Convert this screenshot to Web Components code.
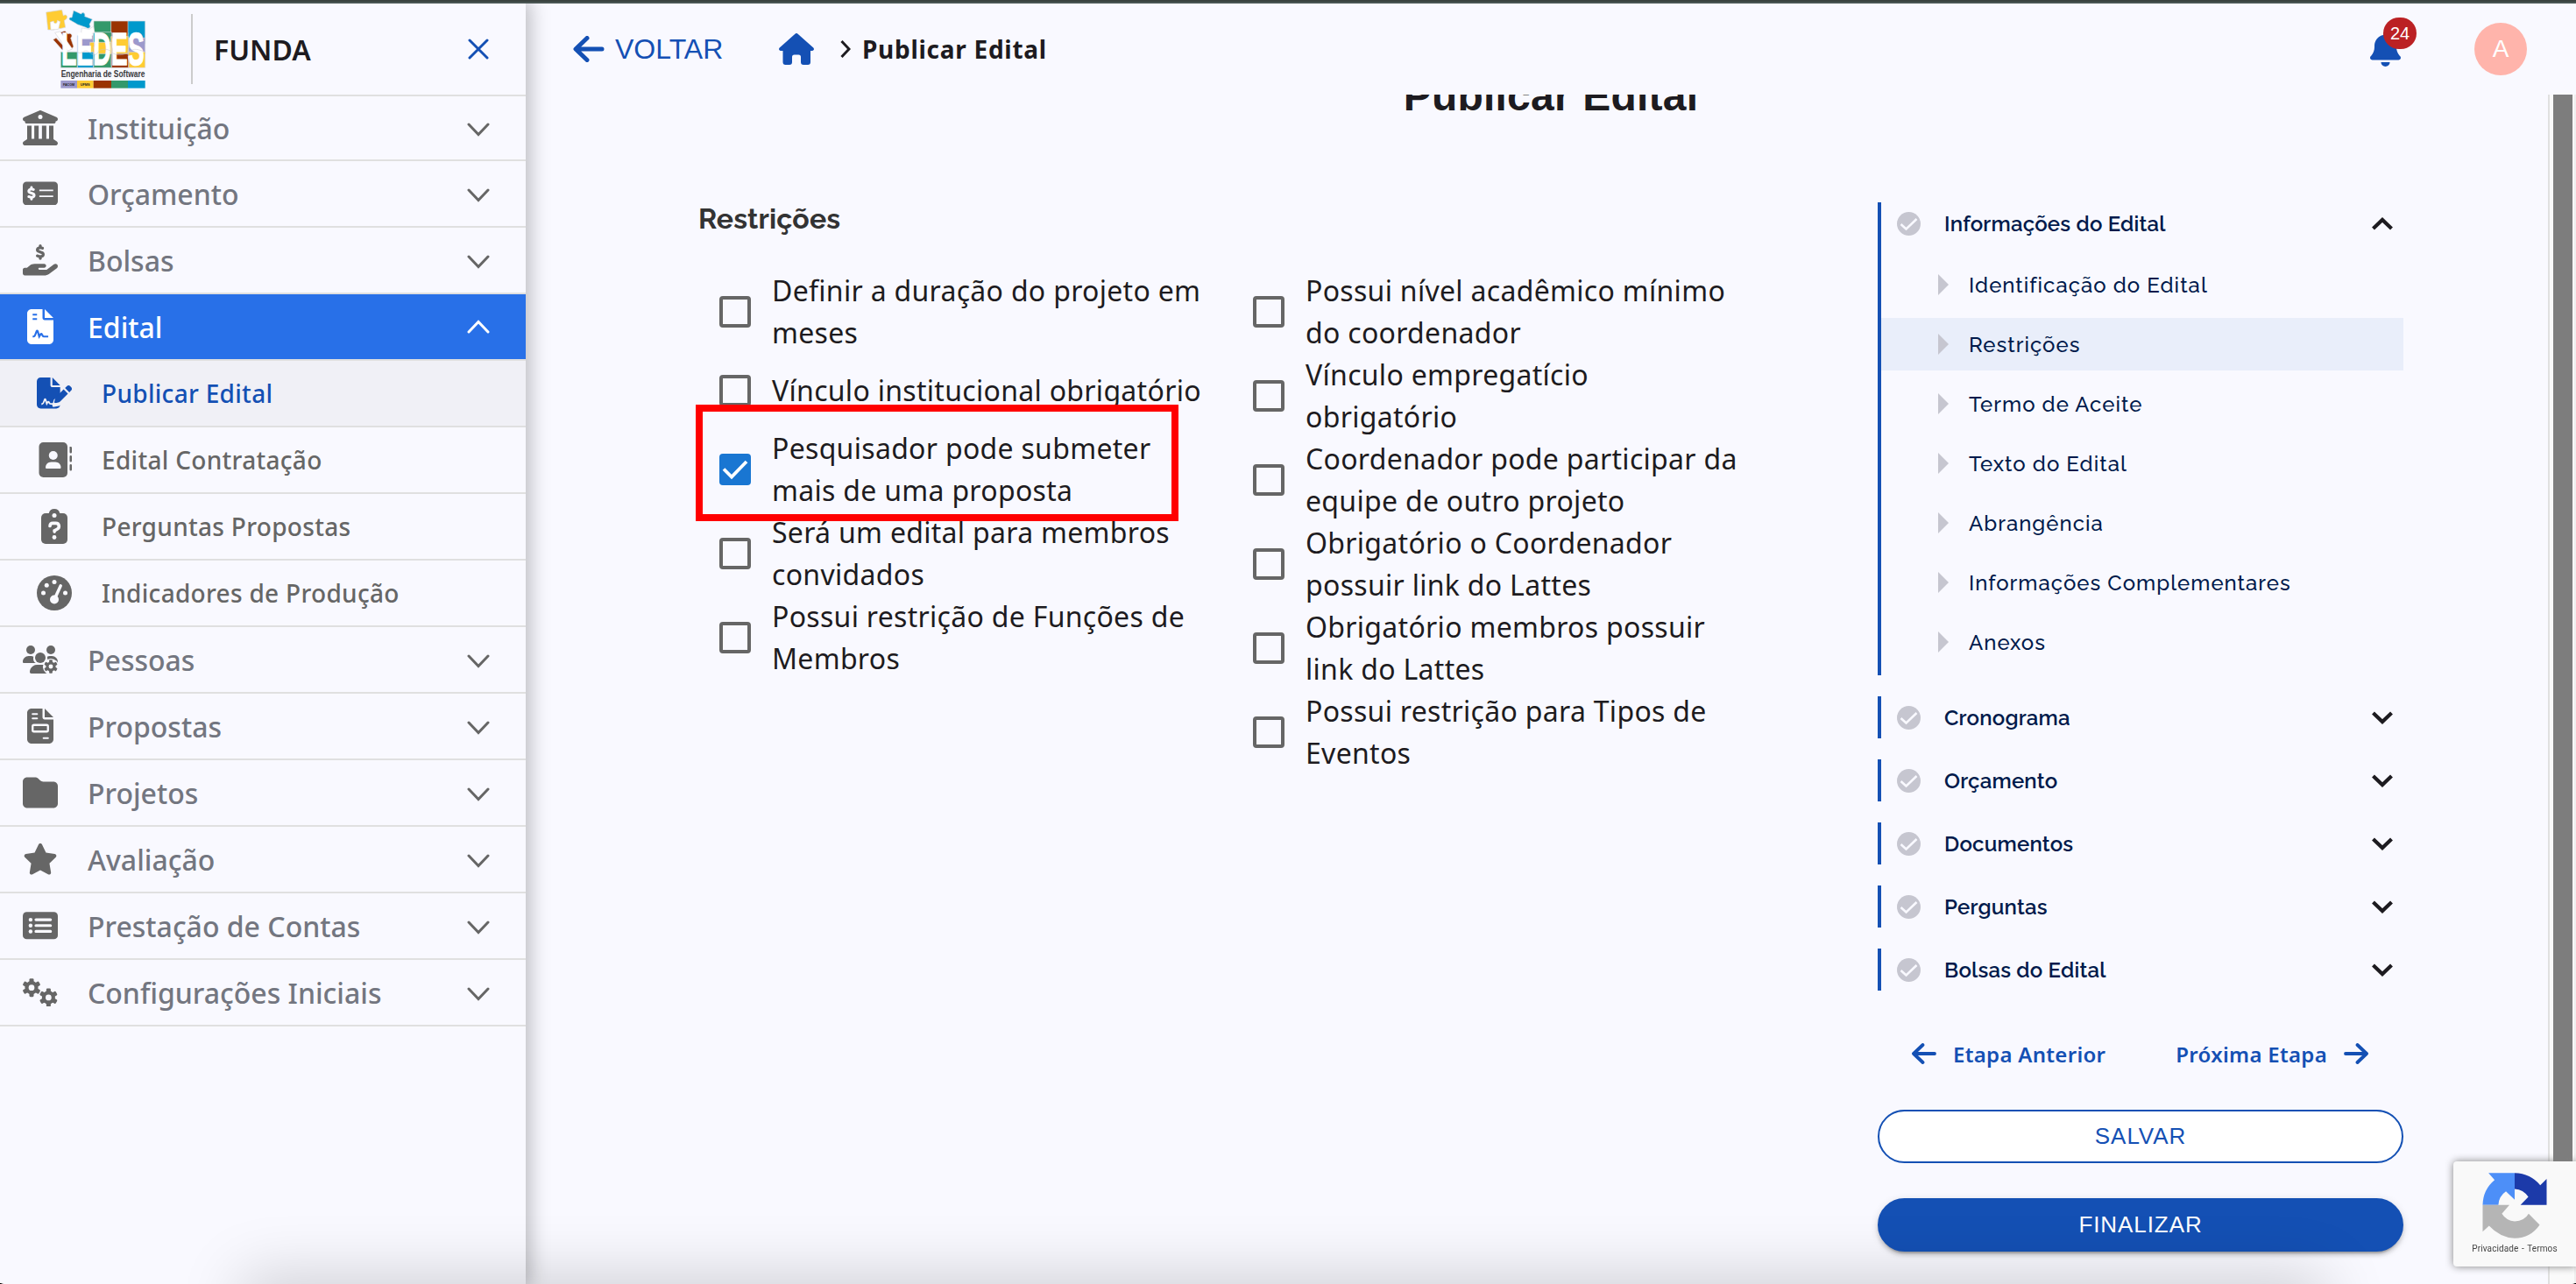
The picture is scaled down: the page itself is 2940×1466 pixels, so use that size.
<!DOCTYPE html>
<html lang="pt-BR">
<head>
<meta charset="utf-8">
<title>Publicar Edital</title>
<style>
	body{
		margin: 0;
		background: #f9f9ff;
		color: #1d1b20;
		font-family: "Noto Sans", sans-serif;
		overflow: hidden;
	}
</style>
</head>
<body>
<edital-page></edital-page>

<script>
const DOLAR = "M312 24V34.5c6.4 1.2 12.6 2.7 18.2 4.2c12.8 3.4 20.4 16.6 17 29.4s-16.6 20.4-29.4 17c-10.9-2.9-21.1-4.9-30.2-5c-7.3-.1-14.7 1.7-19.4 4.4c-2.1 1.3-3.1 2.4-3.5 3c-.3 .5-.7 1.2-.7 2.8c0 .3 0 .5 0 .6c.2 .2 .9 1.2 3.3 2.6c5.8 3.5 14.4 6.2 27.4 10.1l.9 .3c11.1 3.3 25.9 7.8 37.9 15.3c13.7 8.6 26.1 22.9 26.4 44.9c.3 22.5-11.4 38.9-26.7 48.5c-6.7 4.1-13.9 7-21.3 8.8V232c0 13.3-10.7 24-24 24s-24-10.7-24-24V220.6c-9.5-2.3-18.2-5.3-25.6-7.8c-2.1-.7-4.1-1.4-6-2c-12.6-4.2-19.4-17.8-15.2-30.4s17.8-19.4 30.4-15.2c2.6 .9 5 1.7 7.3 2.5c13.6 4.6 23.4 7.9 33.9 8.3c8 .3 15.1-1.6 19.2-4.1c1.9-1.2 2.8-2.2 3.2-2.9c.4-.6 .9-1.8 .8-4.1l0-.2c0-1 0-2.1-4-4.6c-5.7-3.6-14.3-6.4-27.1-10.3l-1.9-.6c-10.8-3.2-25-7.5-36.4-14.4c-13.5-8.1-26.5-22-26.6-44.1c-.1-22.9 12.9-38.6 27.7-47.4c6.4-3.8 13.3-6.4 20.2-8.2V24c0-13.3 10.7-24 24-24s24 10.7 24 24z";
const FOLHA = "M64 0C28.7 0 0 28.7 0 64V448c0 35.3 28.7 64 64 64H320c35.3 0 64-28.7 64-64V160H256c-17.7 0-32-14.3-32-32V0H64zM256 0V128H384L256 0z";

// engrenagem de seis dentes
function gear(cx, cy, r){
	let dentes = "";
	for(let i = 0; i < 6; i++){
		dentes += `<rect x="${cx - r * .24}" y="${cy - r}" width="${r * .48}" height="${r}" rx="${r * .12}" transform="rotate(${i * 60} ${cx} ${cy})"/>`;
	}
	return `${dentes}<circle cx="${cx}" cy="${cy}" r="${r * .72}"/><circle class="cut" cx="${cx}" cy="${cy}" r="${r * .32}"/>`;
}

// [viewBox, largura, conteúdo]
const ICONS = {
	instituicao: ["0 0 512 512", 40, `<path d="M243.4 2.6l-224 96c-14 6-21.8 21-18.7 35.8S16.8 160 32 160v8c0 13.3 10.7 24 24 24H456c13.3 0 24-10.7 24-24v-8c15.2 0 28.3-10.7 31.3-25.6s-4.8-29.9-18.7-35.8l-224-96c-8-3.4-17.2-3.4-25.2 0zM128 224H64V420.3c-.6 .3-1.2 .7-1.8 1.1l-48 32c-11.7 7.8-17 22.4-12.9 35.9S17.9 512 32 512H480c14.1 0 26.5-9.2 30.6-22.7s-1.1-28.1-12.9-35.9l-48-32c-.6-.4-1.2-.7-1.8-1.1V224H384V416H344V224H280V416H232V224H168V416H128V224zM256 64a32 32 0 1 1 0 64 32 32 0 1 1 0-64z"/>`],
	orcamento: ["0 0 576 512", 40, `<rect y="64" width="576" height="384" rx="60"/><path class="cut" transform="translate(-122 136) scale(.92)" d="${DOLAR}"/><path class="ln" stroke-width="26" d="M272 208H500M272 304H500"/>`],
	bolsas: ["0 0 576 512", 40, `<path d="${DOLAR}"/><path d="M568.2 336.3c13.1 17.8 9.3 42.8-8.5 55.9L433.1 485.5c-23.4 17.2-51.6 26.5-80.7 26.5H192 32c-17.7 0-32-14.3-32-32V416c0-17.7 14.3-32 32-32H68.8l44.9-36c22.7-18.2 50.9-28 80-28H272h16 64c17.7 0 32 14.3 32 32s-14.3 32-32 32H288 272c-8.8 0-16 7.2-16 16s7.2 16 16 16H392.6l119.7-88.2c17.8-13.1 42.8-9.3 55.9 8.5z"/>`],
	edital: ["0 0 384 512", 30, `<path d="${FOLHA}"/><path class="ln" stroke-width="28" d="M80 80H144M80 144H144"/><path class="ln" stroke-width="28" d="M80 400h12c16 0 22-14 28-32l18-46c4-10 12-10 16 0l22 78 20-34c6-8 14-8 18 0l14 24c4 8 8 10 16 10h64"/>`],
	publicar: ["0 0 576 512", 40, `<path d="${FOLHA}"/><path class="cut" d="M548 118L280 368l-28 92 16 26 110-20 220-238z"/><path d="M550 143c-15.600-15.600-40.900-15.600-56.600 0L464 172.500l71 71 29.500-29.400c15.600-15.600 15.600-40.900 0-56.600zM441 195L312 325c-4 4-7 9-8.400 15L288 401c-1.400 5.400 .2 11 4.200 15s9.700 5.600 15.200 4.200l60-15c5.600-1.400 10.800-4.300 14.900-8.400L512 267z"/><path class="ln" stroke-width="26" d="M76 436h10c16 0 22-14 28-32l14-40c4-10 12-10 16 0l20 68 16-28c6-8 14-8 18 0l10 16c6 10 12 14 24 14h84"/>`],
	contratacao: ["0 0 512 512", 40, `<rect x="32" width="416" height="512" rx="64"/><circle class="cut" cx="240" cy="192" r="64"/><path class="cut" d="M128 368c0-44 36-80 80-80h64c44 0 80 36 80 80 0 10-7 16-16 16H144c-9 0-16-7-16-16z"/><path d="M480 64h16a16 16 0 0 1 16 16v64a16 16 0 0 1-32 0zM480 208a16 16 0 0 1 32 0v64a16 16 0 0 1-32 0zM480 336a16 16 0 0 1 32 0v64a16 16 0 0 1-32 0z"/>`],
	perguntas: ["0 0 384 512", 30, `<rect y="64" width="384" height="448" rx="64"/><path d="M80 96c20 0 26-6 32-32a82 82 0 0 1 160 0c6 26 12 32 32 32z"/><circle class="cut" cx="192" cy="96" r="32"/><path class="ln" stroke-width="46" stroke-linecap="round" d="M128 250c2-26 16-40 42-40h42c58 0 62 66 20 88l-38 20v16"/><circle class="cut" cx="192" cy="416" r="31"/>`],
	indicadores: ["0 0 512 512", 40, `<circle cx="256" cy="256" r="256"/><g class="cut"><circle cx="256" cy="96" r="32"/><circle cx="144" cy="144" r="32"/><circle cx="96" cy="256" r="32"/><circle cx="416" cy="256" r="32"/><circle cx="256" cy="352" r="64"/></g><path class="ln" stroke-width="46" stroke-linecap="round" d="M262 340L348 152"/>`],
	pessoas: ["0 0 640 512", 40, `<circle cx="144" cy="80" r="80"/><circle cx="512" cy="80" r="80"/><path d="M0 299c0-59 48-107 107-107h43c16 0 31 4 45 10-12 60 8 100 42 118H21c-12 0-21-9-21-21zM405 320c40-26 52-60 42-118 14-6 29-10 45-10h41c59 0 107 48 107 107 0 12-9 21-21 21z"/><circle cx="320" cy="224" r="96"/><path d="M128 485c0-74 60-133 133-133h116c30 0 58 10 80 27v133H155c-15 0-27-12-27-27z"/><circle class="cut" cx="512" cy="384" r="145"/>${gear(512, 384, 124)}`],
	propostas: ["0 0 384 512", 30, `<path d="${FOLHA}"/><path class="ln" stroke-width="28" stroke-linecap="round" d="M80 80H144M80 144H144M240 432H304"/><rect class="ln" stroke-width="30" x="80" y="240" width="224" height="96" rx="18"/>`],
	projetos: ["0 0 512 512", 40, `<path d="M64 480H448c35.3 0 64-28.7 64-64V160c0-35.3-28.7-64-64-64H298.5c-17 0-33.3-6.7-45.3-18.7L226.7 50.7c-12-12-28.3-18.7-45.3-18.7H64C28.7 32 0 60.7 0 96V416c0 35.3 28.7 64 64 64z"/>`],
	avaliacao: ["0 0 576 512", 40, `<path d="M316.900 18C311.600 7 300.400 0 288.100 0s-23.400 7-28.800 18L195 150.300 51.400 171.500c-12 1.800-22 10.200-25.700 21.700s-.7 24.200 7.900 32.700L137.800 329 113.200 474.700c-2 12 3 24.200 12.900 31.300s23 8 33.800 2.300l128.300-68.500 128.300 68.500c10.800 5.700 23.900 4.900 33.800-2.300s14.900-19.300 12.900-31.300L438.500 329 542.700 225.900c8.600-8.500 11.700-21.200 7.900-32.700s-13.700-19.900-25.700-21.700L381.200 150.300 316.900 18z"/>`],
	prestacao: ["0 0 576 512", 40, `<rect y="32" width="576" height="448" rx="64"/><g class="cut"><circle cx="128" cy="160" r="32"/><circle cx="128" cy="256" r="32"/><circle cx="128" cy="352" r="32"/></g><path class="ln" stroke-width="46" stroke-linecap="round" d="M216 160H456M216 256H456M216 352H456"/>`],
	configuracoes: ["0 0 640 512", 40, `${gear(160, 170, 168)}${gear(470, 350, 168)}`],
	sino: ["0 0 448 512", 35, `<path d="M224 0c-17.700 0-32 14.300-32 32V51.200C119 66 64 130.600 64 208v18.800c0 47-17.300 92.400-48.500 127.600l-7.400 8.300c-8.400 9.400-10.400 22.900-5.300 34.400S19.400 416 32 416H416c12.600 0 24-7.400 29.200-18.900s3.100-25-5.300-34.400l-7.400-8.300C401.300 319.200 384 273.900 384 226.800V208c0-77.400-55-142-128-156.800V32c0-17.700-14.300-32-32-32zm45.300 493.300c12-12 18.700-28.300 18.700-45.300H224 160c0 17 6.700 33.300 18.700 45.300s28.300 18.700 45.300 18.700s33.300-6.700 45.300-18.700z"/>`],
	casa: ["0 0 40 36", 40, `<path d="M18.400.7a2.400 2.400 0 0 1 3.200 0L39.300 16.600c1.300 1.200.6 3.400-1.300 3.400H36V33a3 3 0 0 1-3 3H28a3 3 0 0 1-3-3V27a2.500 2.500 0 0 0-2.500-2.500h-5A2.500 2.500 0 0 0 15 27v6a3 3 0 0 1-3 3H7.500a3 3 0 0 1-3-3V20H2C.1 20-.6 17.800.7 16.600z"/>`],
	voltar: ["0 0 36 30", 36, `<path class="st" stroke-width="5" stroke-linecap="round" stroke-linejoin="round" d="M33 15H3.500M16 2.500L3 15 16 27.500"/>`],
	anterior: ["0 0 28 24", 28, `<path class="st" stroke-width="3.800" stroke-linecap="round" stroke-linejoin="round" d="M26 12H2.500M12.500 2L2 12 12.500 22"/>`],
	proxima: ["0 0 28 24", 28, `<path class="st" stroke-width="3.800" stroke-linecap="round" stroke-linejoin="round" d="M2 12H25.500M15.500 2L26 12 15.500 22"/>`],
	fechar: ["0 0 24 24", 24, `<path class="st" stroke-width="3" stroke-linecap="round" d="M2 2L22 22M22 2L2 22"/>`],
	baixo: ["0 0 26 16", 26, `<path class="st" stroke-width="3" stroke-linecap="round" d="M2 2L13 13.500 24 2"/>`],
	cima: ["0 0 26 16", 26, `<path class="st" stroke-width="3" stroke-linecap="round" d="M2 14L13 2.500 24 14"/>`],
	direita: ["0 0 12 20", 12, `<path class="st" stroke-width="3" d="M1.500 1L10 10 1.500 19"/>`],
	abrir: ["0 0 24 15", 24, `<path class="st" stroke-width="4.200" d="M1.500 2L12 12 22.500 2"/>`],
	recolher: ["0 0 24 15", 24, `<path class="st" stroke-width="4.200" d="M1.500 13L12 3 22.500 13"/>`],
	feito: ["0 0 27 27", 27, `<circle cx="13.500" cy="13.500" r="13.500"/><path class="ln" stroke-width="2.600" d="M4.500 14L10.500 19.500 22.500 8"/>`],
	seta: ["0 0 12 24", 12, `<path d="M0 0L12 12 0 24z"/>`]
};

class AppIcon extends HTMLElement{
	constructor(){
		super();
		this.attachShadow({mode:"open"});
	}

	connectedCallback(){
		const [box, width, body] = ICONS[this.getAttribute("name")];
		this.shadowRoot.innerHTML =
		`
		<style>
			:host{ display: inline-flex; align-items: center; justify-content: center; flex: none; }
			svg{ display: block; width: ${width}px; fill: currentColor; }
			.cut{ fill: var(--icon-bg, #f9f9ff); }
			.ln{ fill: none; stroke: var(--icon-bg, #f9f9ff); }
			.st{ fill: none; stroke: currentColor; }
		</style>
		<svg viewBox="${box}">${body}</svg>
		`;
	}
}
customElements.define("app-icon",AppIcon);


class LedesLogo extends HTMLElement{
	constructor(){
		super();
		this.attachShadow({mode:"open"});
		this.shadowRoot.innerHTML =
		`
		<style>
			:host{ display: block; width: 140px; height: 112px; flex: none; }
			svg{ display: block; overflow: visible; }
			text{ font-family: "Liberation Sans", sans-serif; font-weight: 700; }
		</style>
		<svg width="140" height="112" viewBox="0 0 420 336">
			<g stroke="#d8d8dc" stroke-width="2">
				<path fill="#33996b" d="M201 72H261V130H201zM88 178H145V232H88z"/>
				<path fill="#9a3302" d="M260 72H320V135H260z"/>
				<path fill="#0099cc" d="M318 72H377V150H318z"/>
				<path fill="#9c99cc" d="M145 122H200V178H145zM320 130H377V185H320z"/>
				<path fill="#33996b" d="M200 110H262V150H200z"/>
				<path fill="#ffcc33" d="M188 145H262V190H188zM320 178H377V232H320zM260 125H320V185H260z"/>
				<path fill="#33996b" d="M200 184H262V232H200z"/>
				<path fill="#9a3302" d="M262 184H320V232H262z"/>
				<path fill="#0099cc" d="M145 178H200V232H145z"/>
				<path fill="#ffcc33" d="M38 42L92 34 97 54C108 44 118 62 100 70L104 94 84 98C76 88 68 92 66 102L44 102z"/>
				<path fill="#fff" d="M52 76L64 72C62 82 78 84 76 70L86 74 80 100 54 102z"/>
				<path fill="#0099cc" d="M132 36L158 48C164 38 174 48 170 56L196 66 186 84C194 92 184 102 174 94L146 84C138 78 130 76 122 70 114 66 116 58 126 60z"/>
				<path fill="#9a3302" d="M62 136L72 130 104 164 94 172zM84 112L102 106 112 116C122 110 132 122 122 130L132 160 122 170z"/>
				<path fill="#fff" d="M68 112L86 108 128 168 112 174zM160 96L186 100 200 90 204 112 176 120 158 112z"/>
			</g>
			<text x="90" y="221" font-size="158" fill="#fff" stroke="#fff" stroke-width="4" textLength="284" lengthAdjust="spacingAndGlyphs">LEDES</text>
			<path fill="none" stroke="#c4c4cc" stroke-width="1.500" d="M145 178C160 190 168 165 184 178S210 190 216 178 250 165 262 178 300 192 320 178 350 168 377 178M200 120C190 140 212 145 200 162S212 190 200 228M262 112C275 130 250 140 262 160S250 200 262 228M320 112C310 135 332 145 320 165S332 200 320 228"/>
			<path fill="#f9f9ff" d="M86 233H379V275H86z"/>
			<text x="89" y="264" font-size="31" fill="#3a3a3c" textLength="287" lengthAdjust="spacingAndGlyphs">Engenharia de Software</text>
			<path fill="#9c99cc" d="M88 276H144V302H88z"/>
			<path fill="#ffcc33" d="M144 276H200V302H144z"/>
			<path fill="#9a3302" d="M200 276H261V302H200z"/>
			<path fill="#33996b" d="M261 276H318V302H261z"/>
			<path fill="#0099cc" d="M318 276H377V302H318z"/>
			<text x="96" y="294" font-size="12" fill="#222" textLength="39" lengthAdjust="spacingAndGlyphs">FACOM</text>
			<text x="155" y="294" font-size="12" fill="#222" textLength="33" lengthAdjust="spacingAndGlyphs">UFMS</text>
		</svg>
		`;
	}
}
customElements.define("ledes-logo",LedesLogo);


class MenuItem extends HTMLElement{
	constructor(){
		super();
		this.attachShadow({mode:"open"});
	}

	connectedCallback(){
		const open = this.hasAttribute("open");
		this.shadowRoot.innerHTML =
		`
		<style>
			:host{
				display: flex;
				align-items: center;
				box-sizing: border-box;
				height: 76px;
				padding: 0 41px 0 26px;
				border-bottom: 2px solid #e0e0e0;
				color: #737680;
				font-size: 32px;
				font-weight: 500;
			}
			:host([first]){ height: 74px; }
			:host([open]){
				background: #2870e8;
				color: #fff;
				--icon-bg: #2870e8;
			}
			.icon{ width: 40px; color: #666; }
			span{ flex: 1; padding-left: 34px; }
			.arrow{ color: #666; padding-top: 3px; }
			:host([open]) app-icon{ color: #fff; padding-top: 0; }
		</style>
		<app-icon class="icon" name="${this.getAttribute("icon")}"></app-icon>
		<span><slot></slot></span>
		<app-icon class="arrow" name="${open ? "cima" : "baixo"}"></app-icon>
		`;
	}
}
customElements.define("menu-item",MenuItem);


class SubMenuItem extends HTMLElement{
	constructor(){
		super();
		this.attachShadow({mode:"open"});
	}

	connectedCallback(){
		this.shadowRoot.innerHTML =
		`
		<style>
			:host{
				display: flex;
				align-items: center;
				box-sizing: border-box;
				height: 76px;
				padding-left: 42px;
				border-bottom: 2px solid #e0e0e0;
				color: #666;
				font-size: 28px;
				font-weight: 500;
				letter-spacing: .3px;
			}
			:host([active]){
				background: #f0f0f6;
				color: #1450b4;
				--icon-bg: #f0f0f6;
			}
			app-icon{ width: 40px; }
			span{ padding-left: 34px; }
		</style>
		<app-icon name="${this.getAttribute("icon")}"></app-icon>
		<span><slot></slot></span>
		`;
	}
}
customElements.define("sub-menu-item",SubMenuItem);


class SideBar extends HTMLElement{
	constructor(){
		super();
		this.attachShadow({mode:"open"});
		this.shadowRoot.innerHTML =
		`
		<style>
			:host{
				display: flex;
				flex-direction: column;
				flex: none;
				width: 600px;
				background: #f9f9ff;
				box-shadow: 0 0 22px 4px rgba(0,0,0,.27);
				clip-path: inset(0 -40px 0 0);
				position: relative;
				z-index: 2;
			}
			header{
				display: flex;
				align-items: center;
				box-sizing: border-box;
				height: 106px;
				padding: 0 42px 0 40px;
				border-bottom: 2px solid #e0e0e0;
			}
			.line{ width: 2px; height: 80px; margin-left: 38px; background: #ccc; }
			b{ flex: 1; padding-left: 24px; font-size: 32px; font-weight: 600; }
			app-icon{ color: #1450b4; }
		</style>
		<header>
			<ledes-logo></ledes-logo>
			<div class="line"></div>
			<b>FUNDA</b>
			<app-icon name="fechar"></app-icon>
		</header>
		<menu-item first icon="instituicao">Instituição</menu-item>
		<menu-item icon="orcamento">Orçamento</menu-item>
		<menu-item icon="bolsas">Bolsas</menu-item>
		<menu-item open icon="edital">Edital</menu-item>
		<sub-menu-item active icon="publicar">Publicar Edital</sub-menu-item>
		<sub-menu-item icon="contratacao">Edital Contratação</sub-menu-item>
		<sub-menu-item icon="perguntas">Perguntas Propostas</sub-menu-item>
		<sub-menu-item icon="indicadores">Indicadores de Produção</sub-menu-item>
		<menu-item icon="pessoas">Pessoas</menu-item>
		<menu-item icon="propostas">Propostas</menu-item>
		<menu-item icon="projetos">Projetos</menu-item>
		<menu-item icon="avaliacao">Avaliação</menu-item>
		<menu-item icon="prestacao">Prestação de Contas</menu-item>
		<menu-item icon="configuracoes">Configurações Iniciais</menu-item>
		`;
	}
}
customElements.define("side-bar",SideBar);


class TopBar extends HTMLElement{
	constructor(){
		super();
		this.attachShadow({mode:"open"});
		this.shadowRoot.innerHTML =
		`
		<style>
			:host{
				display: flex;
				align-items: center;
				flex: none;
				box-sizing: border-box;
				height: 104px;
				padding: 0 56px 0 54px;
			}
			.blue{ color: #1450b4; }
			.back{
				display: flex;
				align-items: center;
				gap: 12px;
				width: 235px;
				font: 32px "Liberation Sans", sans-serif;
			}
			.crumb{ margin: 0 13px 0 30px; }
			b{ flex: 1; font-size: 28px; letter-spacing: .72px; }
			.bell{ position: relative; margin-right: 84px; display: flex; }
			.badge{
				position: absolute;
				left: 15px;
				top: -16px;
				width: 38px;
				height: 36px;
				border-radius: 19px;
				background: #bb2124;
				color: #fff;
				font: 20px/37px "Liberation Sans", sans-serif;
				text-align: center;
			}
			.avatar{
				width: 60px;
				height: 60px;
				border-radius: 50%;
				background: #ffb4ab;
				color: #fff;
				font: 28px/60px "Liberation Sans", sans-serif;
				text-align: center;
			}
		</style>
		<div class="back blue"><app-icon name="voltar"></app-icon>VOLTAR</div>
		<app-icon class="blue" name="casa"></app-icon>
		<app-icon class="crumb" name="direita"></app-icon>
		<b>Publicar Edital</b>
		<div class="bell blue"><app-icon name="sino"></app-icon><div class="badge">24</div></div>
		<div class="avatar">A</div>
		`;
	}
}
customElements.define("top-bar",TopBar);


class CheckOption extends HTMLElement{
	constructor(){
		super();
		this.attachShadow({mode:"open"});
	}

	connectedCallback(){
		const mark = this.hasAttribute("checked")
			? `<svg width="36" height="36" viewBox="0 0 36 36"><path fill="none" stroke="#fff" stroke-width="3.800" d="M5 17.500L14 26.500 31 9"/></svg>`
			: "";
		this.shadowRoot.innerHTML =
		`
		<style>
			:host{
				display: flex;
				align-items: center;
				min-height: 84px;
				font-size: 32px;
				line-height: 48px;
				letter-spacing: .3px;
				white-space: nowrap;
			}
			.box{
				box-sizing: border-box;
				width: 36px;
				height: 36px;
				margin: 0 24px;
				border: 4px solid #666;
				border-radius: 4px;
			}
			:host([checked]) .box{ border: 0; background: #1976d2; }
			svg{ display: block; }
		</style>
		<div class="box">${mark}</div>
		<div><slot></slot></div>
		`;
	}
}
customElements.define("check-option",CheckOption);


class RestricoesForm extends HTMLElement{
	constructor(){
		super();
		this.attachShadow({mode:"open"});
		this.shadowRoot.innerHTML =
		`
		<style>
			:host{ display: block; width: 1217px; position: relative; }
			h2{
				margin: 0 0 39px;
				font: 700 32px/38px Raleway, Lato, sans-serif;
				letter-spacing: .15px;
				color: #333;
			}
			.cols{ display: grid; grid-template-columns: 609px 608px; align-items: start; }
			.mark{
				position: absolute;
				left: -3px;
				top: 231px;
				box-sizing: border-box;
				width: 551px;
				height: 133px;
				border: 8px solid #f00;
			}
		</style>
		<h2>Restrições</h2>
		<div class="cols">
			<div>
				<check-option>Definir a duração do projeto em<br>meses</check-option>
				<check-option>Vínculo institucional obrigatório</check-option>
				<check-option checked>Pesquisador pode submeter<br>mais de uma proposta</check-option>
				<check-option>Será um edital para membros<br>convidados</check-option>
				<check-option>Possui restrição de Funções de<br>Membros</check-option>
			</div>
			<div>
				<check-option>Possui nível acadêmico mínimo<br>do coordenador</check-option>
				<check-option>Vínculo empregatício<br>obrigatório</check-option>
				<check-option>Coordenador pode participar da<br>equipe de outro projeto</check-option>
				<check-option>Obrigatório o Coordenador<br>possuir link do Lattes</check-option>
				<check-option>Obrigatório membros possuir<br>link do Lattes</check-option>
				<check-option>Possui restrição para Tipos de<br>Eventos</check-option>
			</div>
		</div>
		<div class="mark"></div>
		`;
	}
}
customElements.define("restricoes-form",RestricoesForm);


class StepItem extends HTMLElement{
	constructor(){
		super();
		this.attachShadow({mode:"open"});
		this.shadowRoot.innerHTML =
		`
		<style>
			:host{
				display: flex;
				align-items: center;
				gap: 23px;
				height: 60px;
				padding-left: 65px;
				font: 500 24px Raleway, Lato, sans-serif;
				letter-spacing: 1px;
				color: #001a4b;
			}
			:host([active]){ background: #e9eefa; }
			app-icon{ color: #c6c6d0; }
		</style>
		<app-icon name="seta"></app-icon>
		<span><slot></slot></span>
		`;
	}
}
customElements.define("step-item",StepItem);


class StepGroup extends HTMLElement{
	constructor(){
		super();
		this.attachShadow({mode:"open"});
	}

	connectedCallback(){
		const titulo = this.getAttribute("titulo");
		const open = this.hasAttribute("open");
		this.shadowRoot.innerHTML =
		`
		<style>
			:host{
				display: block;
				margin-bottom: 24px;
				border-left: 4px solid #1450b4;
			}
			.head{
				display: flex;
				align-items: center;
				height: 48px;
				padding: 0 12px 0 18px;
				font: 600 24px Raleway, Lato, sans-serif;
				letter-spacing: .2px;
				color: #001a4b;
			}
			.head span{ flex: 1; padding-left: 27px; }
			.check{ color: #c6c6d0; }
			.arrow{ color: #1d1b20; }
			.items{
				display: flex;
				flex-direction: column;
				gap: 8px;
				padding: 16px 0 8px;
			}
		</style>
		<div class="head">
			<app-icon class="check" name="feito"></app-icon>
			<span>${titulo}</span>
			<app-icon class="arrow" name="${open ? "recolher" : "abrir"}"></app-icon>
		</div>
		${open ? `<div class="items"><slot></slot></div>` : ""}
		`;
	}
}
customElements.define("step-group",StepGroup);


class PillButton extends HTMLElement{
	constructor(){
		super();
		this.attachShadow({mode:"open"});
		this.shadowRoot.innerHTML =
		`
		<style>
			:host{
				display: flex;
				align-items: center;
				justify-content: center;
				box-sizing: border-box;
				height: 61px;
				border: 2px solid #1450b4;
				border-radius: 31px;
				background: #fff;
				color: #1450b4;
				font: 26px "Liberation Sans", sans-serif;
				letter-spacing: .92px;
			}
			:host([filled]){
				background: #1450b4;
				color: #fff;
				box-shadow: 0 6px 2px -4px rgba(0,0,0,.2), 0 4px 4px rgba(0,0,0,.14), 0 2px 10px rgba(0,0,0,.12);
			}
		</style>
		<slot></slot>
		`;
	}
}
customElements.define("pill-button",PillButton);


class StepsPanel extends HTMLElement{
	constructor(){
		super();
		this.attachShadow({mode:"open"});
		this.shadowRoot.innerHTML =
		`
		<style>
			:host{ display: block; width: 600px; }
			nav{
				display: flex;
				justify-content: space-between;
				padding: 0 40px 0 39px;
				margin: 52px 0 44px;
				height: 40px;
				color: #1450b4;
				font-size: 24px;
				font-weight: 600;
				letter-spacing: .3px;
			}
			nav div{ display: flex; align-items: center; gap: 19px; }
			pill-button + pill-button{ margin-top: 40px; }
		</style>
		<step-group open titulo="Informações do Edital">
			<step-item>Identificação do Edital</step-item>
			<step-item active>Restrições</step-item>
			<step-item>Termo de Aceite</step-item>
			<step-item>Texto do Edital</step-item>
			<step-item>Abrangência</step-item>
			<step-item>Informações Complementares</step-item>
			<step-item>Anexos</step-item>
		</step-group>
		<step-group titulo="Cronograma"></step-group>
		<step-group titulo="Orçamento"></step-group>
		<step-group titulo="Documentos"></step-group>
		<step-group titulo="Perguntas"></step-group>
		<step-group titulo="Bolsas do Edital"></step-group>
		<nav>
			<div><app-icon name="anterior"></app-icon>Etapa Anterior</div>
			<div>Próxima Etapa<app-icon name="proxima"></app-icon></div>
		</nav>
		<pill-button>SALVAR</pill-button>
		<pill-button filled>FINALIZAR</pill-button>
		`;
	}
}
customElements.define("steps-panel",StepsPanel);


class ReCaptcha extends HTMLElement{
	constructor(){
		super();
		this.attachShadow({mode:"open"});
		this.shadowRoot.innerHTML =
		`
		<style>
			:host{
				position: fixed;
				right: 0;
				bottom: 20px;
				z-index: 5;
				box-sizing: border-box;
				width: 140px;
				height: 120px;
				padding-top: 13px;
				border-radius: 4px 0 0 4px;
				background: #f9f9f9;
				box-shadow: 0 0 10px gray;
				font: 10px/12px Roboto, sans-serif;
				letter-spacing: .1px;
				word-spacing: 1px;
				color: #444;
				text-align: center;
			}
			svg{ display: block; margin: 0 auto 6px 33px; }
		</style>
		<svg width="74" height="75" viewBox="279 117 222 226">
			<path fill="#4d8ff8" d="M300 118H390V210L360 181Q335 198 334 228H280Q281 175 321 142z"/>
			<path fill="#1c3aa9" d="M390 118Q445 120 478 160L500 138V228H410L437 200Q420 175 390 173z"/>
			<path fill="#b5b5b5" d="M280 228H372L346 258Q362 283 390 284 424 283 438 258L476 296Q445 341 390 342 340 340 302 299L280 320z"/>
		</svg>
		Privacidade - Termos
		`;
	}
}
customElements.define("re-captcha",ReCaptcha);


class EditalPage extends HTMLElement{
	constructor(){
		super();
		this.attachShadow({mode:"open"});
		this.shadowRoot.innerHTML =
		`
		<style>
			:host{ display: flex; flex-direction: column; height: 1466px; overflow: hidden; }
			.strip{ flex: none; height: 2px; background: #3a4340; border-bottom: 2px solid #4a5654; }
			.app{ flex: 1; display: flex; min-height: 0; }
			main{ flex: 1; display: flex; flex-direction: column; min-width: 0; }
			.view{ flex: 1; display: flex; min-height: 0; }
			.content{ flex: 1; padding: 0 165px 0 197px; overflow: hidden; }
			h1{
				margin: -26px 0 93px;
				font: 700 48px/56px "Liberation Sans", sans-serif;
				letter-spacing: .2px;
				text-align: center;
			}
			.body{ display: flex; justify-content: space-between; }
			.scroll{
				box-sizing: border-box;
				width: 32px;
				padding: 0 2px 0 4px;
				border-left: 2px solid #e0e0e0;
				border-right: 2px solid #efefef;
				background: #fafafa;
			}
			.thumb{ width: 22px; height: 1280px; background: #7d7d7d; border-radius: 0 0 11px 11px; }
			.shade{
				position: fixed;
				left: 300px;
				right: 310px;
				bottom: -44px;
				height: 30px;
				z-index: 4;
				box-shadow: 0 0 70px 24px rgba(0,0,0,.17);
			}
			.corner{ position: fixed; bottom: 0; width: 16px; height: 16px; z-index: 6; }
			.left{ left: -11px; background: radial-gradient(circle at 100% 0, transparent 15.500px, #000 16px); }
			.right{ right: -11px; background: radial-gradient(circle at 0 0, transparent 15.500px, #000 16px); }
		</style>
		<div class="strip"></div>
		<div class="app">
			<side-bar></side-bar>
			<main>
				<top-bar></top-bar>
				<div class="view">
					<div class="content">
						<h1>Publicar Edital</h1>
						<div class="body">
							<restricoes-form></restricoes-form>
							<steps-panel></steps-panel>
						</div>
					</div>
					<div class="scroll"><div class="thumb"></div></div>
				</div>
			</main>
		</div>
		<re-captcha></re-captcha>
		<div class="shade"></div>
		<div class="corner left"></div>
		<div class="corner right"></div>
		`;
	}
}
customElements.define("edital-page",EditalPage);
</script>
</body>
</html>
